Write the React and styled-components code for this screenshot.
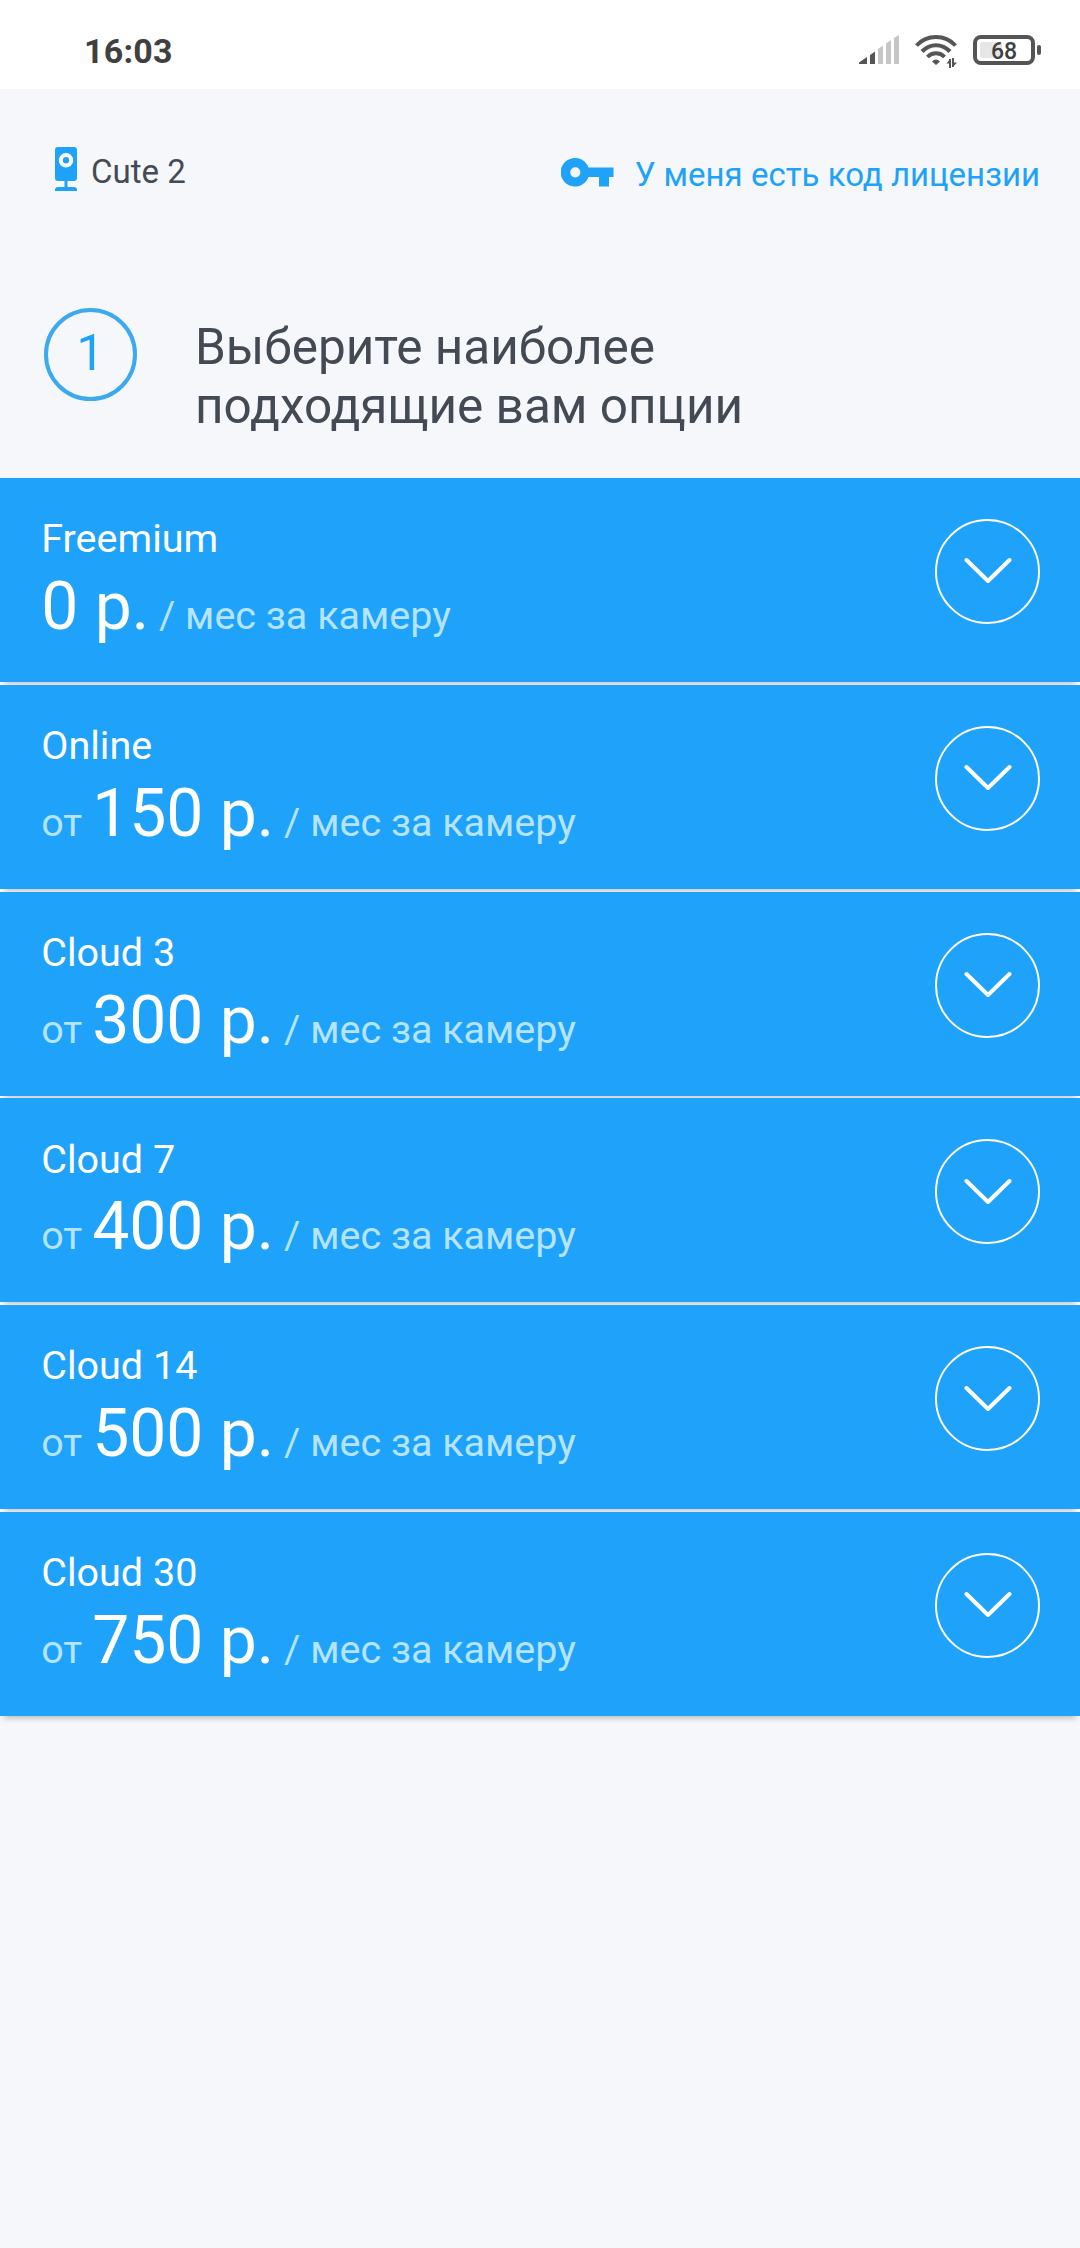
import React from "react";
import styled, { createGlobalStyle } from "styled-components";

const colors = {
  blue: "#1fa2fa",
  pale: "#b4e4ff",
  dark: "#434a54",
  status: "#555555",
  page: "#f5f7fb",
};

const GlobalStyle = createGlobalStyle`
  body {
    margin: 0;
    background: ${colors.page};
    font-family: Roboto, "Liberation Sans", sans-serif;
  }
`;

const StyledPage = styled.div`
  min-height: 2248px;
  width: 100%;
  background: ${colors.page};
`;

const StyledStatusBar = styled.div`
  height: 89px;
  box-sizing: border-box;
  padding: 11px 39px 0 84px;
  display: flex;
  justify-content: space-between;
  align-items: flex-start;
  background: white;
`;

const StyledTime = styled.div`
  font-size: 34px;
  line-height: 80px;
  font-weight: 700;
  letter-spacing: 0.2px;
  color: #404040;
`;

const StyledStatusIcons = styled.div`
  display: flex;
  padding-top: 24px;
  svg {
    display: block;
  }
  .wifi {
    margin: 0 15px;
  }
`;

const StyledHeader = styled.div`
  height: 219px;
  box-sizing: border-box;
  padding: 58px 40px 0 55px;
  display: flex;
  justify-content: space-between;
  align-items: flex-start;
`;

const StyledDevice = styled.div`
  display: flex;
  gap: 14px;
  font-size: 33px;
  line-height: 50px;
  color: ${colors.dark};
`;

const StyledLink = styled.a`
  display: flex;
  gap: 21px;
  font-size: 33px;
  line-height: 56px;
  color: ${colors.blue};
  text-decoration: none;
  svg {
    margin-top: 11px;
  }
`;

const StyledStep = styled.div`
  height: 170px;
  padding: 0 44px;
  display: flex;
  align-items: flex-start;
`;

const StyledStepNumber = styled.div`
  width: 93px;
  height: 93px;
  box-sizing: border-box;
  border: 4px solid #3da9f0;
  border-radius: 50%;
  font-size: 49.5px;
  line-height: 83px;
  text-align: center;
  color: ${colors.blue};
`;

const StyledStepTitle = styled.div`
  margin: 10px 0 0 58px;
  font-size: 49.5px;
  line-height: 59px;
  color: ${colors.dark};
`;

const StyledPlans = styled.div`
  display: flex;
  flex-direction: column;
  gap: 2.75px;
  background: white;
`;

const StyledPlan = styled.div`
  height: 204.05px;
  box-sizing: border-box;
  padding: 38.2px 40px 0 41.25px;
  display: flex;
  justify-content: space-between;
  align-items: flex-start;
  background: ${colors.blue};
  box-shadow: 0 6px 6px -4px rgba(0, 0, 0, 0.25);
`;

const StyledPlanName = styled.div`
  font-size: 39.5px;
  line-height: 45px;
  color: white;
`;

const StyledPrice = styled.div`
  margin-top: 6.8px;
  font-size: 39.5px;
  line-height: 77px;
  white-space: pre;
  color: ${colors.pale};
  .amount {
    font-size: 66px;
    color: white;
  }
`;

const StyledExpand = styled.button`
  margin: 2.8px 0 0;
  padding: 0;
  width: 105px;
  height: 105px;
  display: flex;
  justify-content: center;
  align-items: center;
  background: transparent;
  border: 2px solid white;
  border-radius: 50%;
`;

const SignalIcon = () => (
  <svg width="41" height="30" viewBox="0 0 41 30">
    <path d="M0 27.5L8 22V29H0Z" fill={colors.status} />
    <path d="M11 20L16 16.500V29H11Z" fill={colors.status} />
    <path d="M19 14L24 10.500V29H19Z" fill="#c6c6c6" />
    <path d="M27 8.500L32 5V29H27Z" fill="#c6c6c6" />
    <path d="M35 3L40 0V29H35Z" fill="#c6c6c6" />
  </svg>
);

const WifiIcon = () => (
  <svg
    className="wifi"
    width="43"
    height="33"
    viewBox="0 0 43 33"
    fill="none"
    stroke={colors.status}
    strokeWidth="4"
  >
    <path d="M1.500 10.500Q9.500 2 21 2T40.500 10.500" />
    <path d="M7 16.500Q13 10.200 21 10.200T35 16.500" />
    <path d="M12.500 22Q16 18.300 21 18.300T29.500 22" />
    <path d="M17 26.500Q21 22.500 25 26.500L21 30Z" fill={colors.status} stroke="none" />
    <path d="M35 24V33M38 23V32" strokeWidth="2" />
    <path d="M35 24L31.500 28.500H35ZM38 32L42 27.500H38Z" fill={colors.status} stroke="none" />
  </svg>
);

const BatteryIcon = () => (
  <svg width="68" height="30" viewBox="0 0 68 30">
    <rect x="2" y="2" width="58" height="26" rx="6" fill="white" stroke={colors.status} strokeWidth="4" />
    <rect x="7" y="7" width="22" height="16" rx="2" fill="#e6e6e6" />
    <rect x="64" y="10" width="4" height="10" rx="2" fill={colors.status} />
    <text x="31" y="23.500" textAnchor="middle" fontSize="23" fontWeight="500" fill="#404040">
      68
    </text>
  </svg>
);

const CameraIcon = () => (
  <svg width="22" height="44" viewBox="0 0 22 44" fill={colors.blue}>
    <rect width="22" height="34" rx="3" />
    <rect x="9.500" y="33" width="3" height="8" />
    <path d="M0 44V43Q0 40 3 40H19Q22 40 22 43V44Z" />
    <circle cx="11" cy="13.300" r="5.200" fill={colors.blue} stroke="white" strokeWidth="4" />
  </svg>
);

const KeyIcon = () => (
  <svg width="53" height="29" viewBox="0 0 53 29">
    <path
      fill={colors.blue}
      fillRule="evenodd"
      d="M27.500 9.500H52.500V19H48V28.500H38V19H27.500A14.300 14.300 0 1 1 27.500 9.500ZM14.300 9.200A5.100 5.100 0 1 0 14.300 19.400A5.100 5.100 0 1 0 14.300 9.200Z"
    />
  </svg>
);

const ChevronIcon = () => (
  <svg width="48" height="28" viewBox="0 0 48 28" fill="none">
    <path
      d="M2.500 3L24 24L45.500 3"
      stroke="white"
      strokeWidth="4"
      strokeLinecap="round"
      strokeLinejoin="round"
    />
  </svg>
);

const plans = [
  { name: "Freemium", price: "0" },
  { name: "Online", price: "150", from: true },
  { name: "Cloud 3", price: "300", from: true },
  { name: "Cloud 7", price: "400", from: true },
  { name: "Cloud 14", price: "500", from: true },
  { name: "Cloud 30", price: "750", from: true },
];

const Plan = (props) => {
  return (
    <StyledPlan>
      <div>
        <StyledPlanName>{props.item.name}</StyledPlanName>
        <StyledPrice>
          {props.item.from && "от "}
          <span className="amount">{props.item.price} р.</span>
          {" / мес за камеру"}
        </StyledPrice>
      </div>
      <StyledExpand>
        <ChevronIcon />
      </StyledExpand>
    </StyledPlan>
  );
};

export default function App() {
  return (
    <StyledPage>
      <GlobalStyle />
      <StyledStatusBar>
        <StyledTime>16:03</StyledTime>
        <StyledStatusIcons>
          <SignalIcon />
          <WifiIcon />
          <BatteryIcon />
        </StyledStatusIcons>
      </StyledStatusBar>
      <StyledHeader>
        <StyledDevice>
          <CameraIcon />
          <span>Cute 2</span>
        </StyledDevice>
        <StyledLink href="#">
          <KeyIcon />
          <span>У меня есть код лицензии</span>
        </StyledLink>
      </StyledHeader>
      <StyledStep>
        <StyledStepNumber>1</StyledStepNumber>
        <StyledStepTitle>
          Выберите наиболее
          <br />
          подходящие вам опции
        </StyledStepTitle>
      </StyledStep>
      <StyledPlans>
        {plans.map((item) => (
          <Plan key={item.name} item={item} />
        ))}
      </StyledPlans>
    </StyledPage>
  );
}
